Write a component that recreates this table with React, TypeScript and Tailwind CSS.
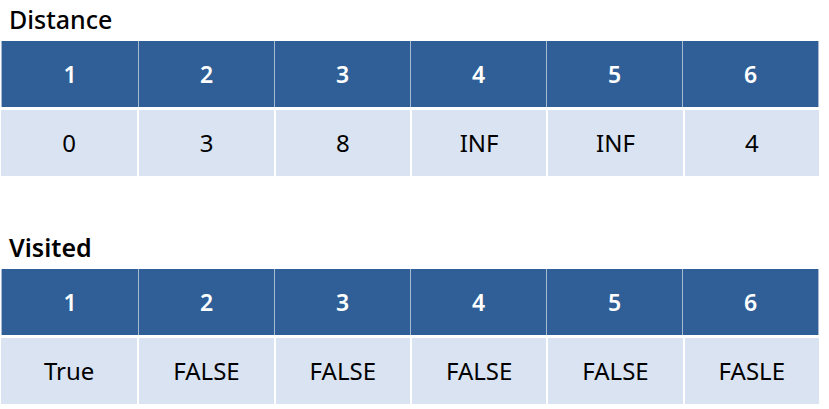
import React from 'react';

const distance = ['0', '3', '8', 'INF', 'INF', '4'];
const visited = ['True', 'FALSE', 'FALSE', 'FALSE', 'FALSE', 'FASLE'];

// Tableau à deux lignes : en-tête (1..6) et valeurs
const NodeTable = ({ values }: { values: string[] }) => (
  <div className="ml-px w-[818px]">
    <div className="grid grid-cols-6 h-[66px] bg-[#2f5f96] border-x border-[#a7b9d3]">
      {values.map((_, i) => (
        <div
          key={i}
          className={`flex items-center justify-center text-white font-semibold text-[23px] ${
            i > 0 ? 'border-l border-[#a7b9d3]' : ''
          }`}
        >
          {i + 1}
        </div>
      ))}
    </div>
    <div className="grid grid-cols-6 h-[66px] mt-[3px] bg-[#d9e3f2]">
      {values.map((v, i) => (
        <div
          key={i}
          className={`flex items-center justify-center text-black text-[24px] ${
            i > 0 ? 'border-l-2 border-white' : ''
          }`}
        >
          {v}
        </div>
      ))}
    </div>
  </div>
);

export default function App() {
  return (
    <div className="w-[829px] h-[409px] bg-white font-['Noto_Sans',sans-serif] overflow-hidden">
      <div className="h-[41px] pl-[9px] pt-[3px] text-[25px] leading-[32px] font-medium text-black">
        Distance
      </div>
      <NodeTable values={distance} />
      <div className="h-[52px]" />
      <div className="h-[41px] pl-[9px] pt-[3px] text-[25px] leading-[32px] font-semibold text-black">
        Visited
      </div>
      <NodeTable values={visited} />
    </div>
  );
}
